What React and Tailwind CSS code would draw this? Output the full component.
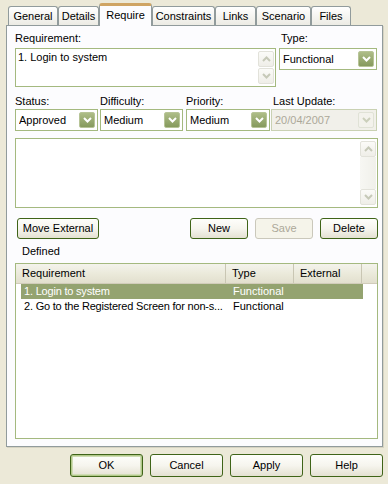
import React from 'react';

// Windows XP (olive theme) "Require" property page

const Chevron = ({ up = false }) => (
  <svg width="9" height="6" viewBox="0 0 9 6">
    <path
      d={up ? 'M1 5 L4.5 1.5 L8 5' : 'M1 1 L4.5 4.5 L8 1'}
      fill="none"
      stroke="currentColor"
      strokeWidth="2"
    />
  </svg>
);

const Dropdown = ({ value, className = '', disabled = false }) => (
  <div
    className={`flex items-center h-[22px] border pl-[3px] pr-[2px] ${
      disabled ? 'border-[#c9d1b3] bg-[#f1f0ea] text-[#aca899]' : 'border-[#a4b97f] bg-white'
    } ${className}`}
  >
    <span className="flex-1 whitespace-nowrap overflow-hidden">{value}</span>
    <div
      className={`flex items-center justify-center w-[16px] h-[16px] rounded-[2px] border ${
        disabled
          ? 'bg-[#f3f2ec] border-[#e0e2d6] text-[#cbcfbb]'
          : 'bg-gradient-to-b from-[#aebd88] to-[#869a5d] border-[#b7c497] text-white'
      }`}
    >
      <Chevron />
    </div>
  </div>
);

const ScrollBtn = ({ up }) => (
  <div className="flex items-center justify-center w-[16px] h-[16px] rounded-[2px] border border-[#e2e2da] bg-gradient-to-b from-[#fbfbf8] to-[#efeee8] text-[#c6c9b8]">
    <Chevron up={up} />
  </div>
);

const Btn = ({ children, className = '', disabled = false, isDefault = false }) => (
  <div
    className={`flex items-center justify-center rounded-[3px] border ${
      disabled
        ? 'border-[#cac8bb] bg-[#f5f4ea] text-[#aca899]'
        : 'border-[#3f6418] bg-gradient-to-b from-[#fefefb] via-[#f6f5ee] to-[#e4e1d2]'
    } ${isDefault ? 'shadow-[inset_0_0_0_1px_#b2c98a,inset_0_0_0_2px_#cfdcb4]' : ''} ${className}`}
  >
    {children}
  </div>
);

const tabs = [
  { label: 'General', w: 'w-[50px]' },
  { label: 'Details', w: 'w-[41px]' },
  { label: 'Require', w: 'w-[53px]', active: true },
  { label: 'Constraints', w: 'w-[63px]' },
  { label: 'Links', w: 'w-[41px]' },
  { label: 'Scenario', w: 'w-[55px]' },
  { label: 'Files', w: 'w-[40px]' },
];

const rows = [
  { req: '1. Login to system', type: 'Functional', selected: true },
  { req: '2. Go to the Registered Screen for non-s...', type: 'Functional' },
];

export default function App() {
  return (
    <div className="w-[388px] h-[484px] overflow-hidden bg-[#ece9d8] text-black text-[11px] leading-[13px] font-['Liberation_Sans',Arial,sans-serif]">
      {/* tab strip */}
      <div className="flex items-start h-[25px] pl-[8px]">
        {tabs.map((t) =>
          t.active ? (
            <div
              key={t.label}
              className={`relative z-10 mt-[3px] h-[23px] ${t.w} flex items-center justify-center pb-[2px] rounded-t-[3px] border-x border-[#919b9c] border-t-[3px] border-t-[#cfa463] bg-[#fcfcfe]`}
            >
              {t.label}
            </div>
          ) : (
            <div
              key={t.label}
              className={`mt-[6px] h-[19px] ${t.w} flex items-center justify-center rounded-t-[3px] border-x border-t border-[#919b9c] bg-gradient-to-b from-white to-[#ecebe4]`}
            >
              {t.label}
            </div>
          )
        )}
      </div>

      {/* tab page */}
      <div className="ml-[6px] w-[377px] h-[422px] border border-[#919b9c] bg-[#fcfcfe] pl-[8px] pr-[4px] pt-[6px] shadow-[1px_1px_0_#d6d3c2]">
        <div className="flex">
          <div className="w-[261px]">
            <div>Requirement:</div>
            <div className="mt-[3px] h-[39px] flex border border-[#a4b97f] bg-white">
              <div className="flex-1 pl-[2px] pt-[2px]">1. Login to system</div>
              <div className="flex flex-col gap-[1px] pt-[2px] pr-[1px]">
                <ScrollBtn up />
                <ScrollBtn />
              </div>
            </div>
          </div>
          <div className="ml-[3px] w-[98px]">
            <div className="pl-[2px]">Type:</div>
            <Dropdown value="Functional" className="mt-[3px]" />
          </div>
        </div>

        <div className="flex mt-[8px]">
          <div className="w-[83px]">
            <div>Status:</div>
            <Dropdown value="Approved" className="mt-[1px]" />
          </div>
          <div className="ml-[2px] w-[83px]">
            <div>Difficulty:</div>
            <Dropdown value="Medium" className="mt-[1px]" />
          </div>
          <div className="ml-[3px] w-[84px]">
            <div>Priority:</div>
            <Dropdown value="Medium" className="mt-[1px]" />
          </div>
          <div className="ml-[1px] w-[106px]">
            <div className="pl-[2px]">Last Update:</div>
            <Dropdown value="20/04/2007" disabled className="mt-[1px]" />
          </div>
        </div>

        {/* notes */}
        <div className="mt-[7px] w-[363px] h-[70px] flex border border-[#a4b97f] bg-white">
          <div className="flex-1" />
          <div className="flex flex-col justify-between py-[2px] pr-[1px]">
            <ScrollBtn up />
            <div className="flex-1 w-[16px] bg-gradient-to-r from-[#f7f7f3] to-[#f0f0ea]" />
            <ScrollBtn />
          </div>
        </div>

        <div className="flex items-center mt-[10px] w-[363px]">
          <Btn className="ml-[2px] w-[82px] h-[21px]">Move External</Btn>
          <div className="ml-auto flex gap-[7px]">
            <Btn className="w-[58px] h-[21px]">New</Btn>
            <Btn disabled className="w-[58px] h-[21px]">Save</Btn>
            <Btn className="w-[58px] h-[21px]">Delete</Btn>
          </div>
        </div>

        <div className="mt-[6px] pl-[7px]">Defined</div>

        {/* list view */}
        <div className="mt-[5px] w-[363px] h-[176px] border border-[#a4b97f] bg-white">
          <div className="flex h-[20px] items-center bg-gradient-to-b from-[#f4f3ec] via-[#ebeadb] to-[#e2dfce] border-b border-[#d1ccba]">
            <div className="w-[210px] h-full flex items-center pl-[6px] border-r border-[#c9c6b3]">Requirement</div>
            <div className="w-[68px] h-full flex items-center pl-[6px] border-r border-[#c9c6b3]">Type</div>
            <div className="w-[68px] h-full flex items-center pl-[6px] border-r border-[#c9c6b3]">External</div>
          </div>
          <div className="pl-[5px]">
            {rows.map((r) => (
              <div
                key={r.req}
                className={`flex w-[342px] h-[15px] items-center ${
                  r.selected ? 'bg-[#94a370] text-white' : ''
                }`}
              >
                <div className="flex-none w-[205px] pl-[3px] whitespace-nowrap tracking-[-0.2px]">{r.req}</div>
                <div className="pl-[7px]">{r.type}</div>
              </div>
            ))}
          </div>
        </div>
      </div>

      {/* dialog buttons */}
      <div className="flex justify-end gap-[7px] pr-[5px] mt-[7px]">
        <Btn isDefault className="w-[73px] h-[23px]">OK</Btn>
        <Btn className="w-[73px] h-[23px]">Cancel</Btn>
        <Btn className="w-[73px] h-[23px]">Apply</Btn>
        <Btn className="w-[73px] h-[23px]">Help</Btn>
      </div>
    </div>
  );
}
